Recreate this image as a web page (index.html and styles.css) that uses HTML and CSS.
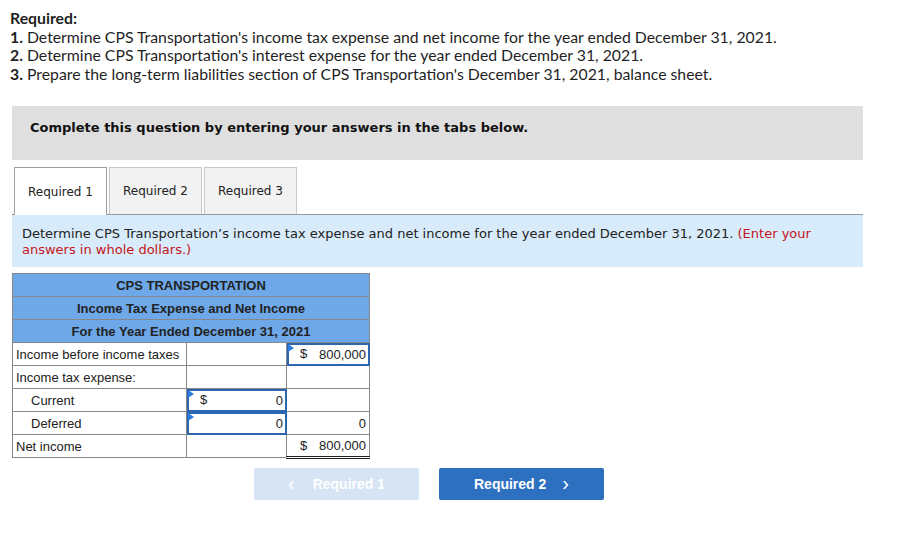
FILE: index.html
```html
<!DOCTYPE html>
<html>
<head>
<meta charset="utf-8">
<link rel="stylesheet" href="styles.css">
</head>
<body>
<div class="intro">
  <div class="req-title">Required:</div>
  <div class="req-line"><b>1.</b> Determine CPS Transportation's income tax expense and net income for the year ended December 31, 2021.</div>
  <div class="req-line"><b>2.</b> Determine CPS Transportation's interest expense for the year ended December 31, 2021.</div>
  <div class="req-line"><b>3.</b> Prepare the long-term liabilities section of CPS Transportation's December 31, 2021, balance sheet.</div>
</div>

<div class="complete-box">Complete this question by entering your answers in the tabs below.</div>

<div class="tabs">
  <div class="tab active">Required 1</div>
  <div class="tab">Required 2</div>
  <div class="tab">Required 3</div>
</div>

<div class="info-box">Determine CPS Transportation’s income tax expense and net income for the year ended December 31, 2021. <span class="red">(Enter your answers in whole dollars.)</span></div>

<table class="sheet">
  <tr class="hd"><td colspan="3">CPS TRANSPORTATION</td></tr>
  <tr class="hd"><td colspan="3">Income Tax Expense and Net Income</td></tr>
  <tr class="hd"><td colspan="3">For the Year Ended December 31, 2021</td></tr>
  <tr>
    <td class="lbl">Income before income taxes</td>
    <td class="c2"></td>
    <td class="c3 inp"><span class="flag"></span><span class="dol">$</span><span class="val">800,000</span></td>
  </tr>
  <tr>
    <td class="lbl">Income tax expense:</td>
    <td class="c2"></td>
    <td class="c3"></td>
  </tr>
  <tr>
    <td class="lbl ind">Current</td>
    <td class="c2 inp"><span class="flag"></span><span class="dol">$</span><span class="val">0</span></td>
    <td class="c3"></td>
  </tr>
  <tr>
    <td class="lbl ind">Deferred</td>
    <td class="c2 inp"><span class="flag"></span><span class="val">0</span></td>
    <td class="c3"><span class="val">0</span></td>
  </tr>
  <tr>
    <td class="lbl">Net income</td>
    <td class="c2"></td>
    <td class="c3 dbl"><span class="dol">$</span><span class="val">800,000</span></td>
  </tr>
</table>

<div class="nav">
  <div class="btn disabled"><span class="chev">&lsaquo;</span>Required 1</div>
  <div class="btn primary">Required 2<span class="chev">&rsaquo;</span></div>
</div>
</body>
</html>
```
FILE: styles.css
```css
* { box-sizing: border-box; }
body {
  margin: 0;
  background: #fff;
  font-family: "Open Sans", sans-serif;
  color: #222;
}
.intro {
  padding: 9px 0 0 10px;
  font-family: "Lato", sans-serif;
  font-size: 15.8px;
  line-height: 18.5px;
  color: #1f1f1f;
}
.req-title { font-weight: bold; }
.req-line b { font-weight: bold; }

.complete-box {
  margin: 23px 0 0 12px;
  width: 851px;
  height: 54px;
  background: #dfdfdf;
  font-family: "DejaVu Sans", Verdana, sans-serif;
  font-weight: bold;
  font-size: 13px;
  color: #111;
  padding: 14px 0 0 18px;
}

.tabs {
  display: flex;
  gap: 2px;
  margin: 7px 0 0 14px;
  height: 47px;
  align-items: flex-end;
}
.tab {
  width: 93px;
  height: 47px;
  display: flex;
  align-items: center;
  justify-content: center;
  font-family: "DejaVu Sans", Verdana, sans-serif;
  font-size: 12px;
  color: #222;
  background: #f2f2f2;
  border: 1px solid #c8c8c8;
  border-bottom: none;
}
.tab.active {
  background: #fff;
  border-color: #a0a0a0;
  height: 48px;
  margin-bottom: -1px;
  position: relative;
  z-index: 1;
}

.info-box {
  margin-left: 12px;
  width: 851px;
  height: 53px;
  background: #d8ebfa;
  border-top: 1px solid #999;
  padding: 11px 20px 0 10px;
  font-family: "DejaVu Sans", Verdana, sans-serif;
  font-size: 13px;
  line-height: 16px;
  color: #222;
}
.red { color: #c4161c; }

.sheet {
  margin: 6px 0 0 12px;
  border-collapse: collapse;
  font-family: "Liberation Sans", Arial, sans-serif;
  font-size: 13px;
  color: #222;
}
.sheet td {
  border: 1px solid #888;
  height: 23px;
  padding: 0;
}
.sheet .hd td {
  background: #6ea8e8;
  text-align: center;
  font-weight: bold;
  width: 357px;
}
.lbl { width: 174px; padding-left: 3px !important; }
.lbl.ind { padding-left: 18px !important; }
.c2 { width: 100px; }
.c3 { width: 83px; }
.sheet td.c2, .sheet td.c3 {
  position: relative;
  text-align: right;
}
.inp { outline: 2px solid #2c66b0; outline-offset: -2px; }
.sheet td.inp { border-color: #2c66b0; }
.flag {
  position: absolute;
  left: 1px;
  top: 1px;
  width: 0;
  height: 0;
  border-top: 4px solid transparent;
  border-bottom: 4px solid transparent;
  border-left: 6px solid #2c7be5;
}
.dol {
  position: absolute;
  left: 13px;
  top: 3px;
}
.val { padding-right: 3px; }
.sheet td.dbl { border-bottom: 3px double #222; }

.nav {
  display: flex;
  gap: 20px;
  margin: 9px 0 0 254px;
}
.btn {
  width: 165px;
  height: 32px;
  border-radius: 2px;
  display: flex;
  align-items: center;
  justify-content: center;
  font-family: "Liberation Sans", Arial, sans-serif;
  font-weight: bold;
  font-size: 14px;
  color: #fff;
}
.btn.disabled { background: #d6e4f3; }
.btn.primary { background: #2e70c0; }
.chev { font-size: 20px; font-weight: normal; line-height: 1; margin: -3px 0 0 0; }
.disabled .chev { margin-right: 18px; }
.primary .chev { margin-left: 16px; }
```
